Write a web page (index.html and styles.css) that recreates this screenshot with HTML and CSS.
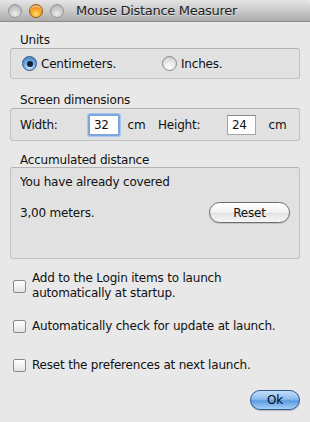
FILE: index.html
```html
<!DOCTYPE html>
<html>
<head>
<meta charset="utf-8">
<link rel="stylesheet" href="styles.css">
</head>
<body>
<div class="window">
  <div class="titlebar">
    <div class="lights">
      <span class="light gray"></span>
      <span class="light orange"></span>
      <span class="light gray"></span>
    </div>
    <div class="title">Mouse Distance Measurer</div>
  </div>
  <div class="content">
    <div class="label">Units</div>
    <div class="box units">
      <label class="radio-item first"><span class="radio on"><span class="dot"></span></span>Centimeters.</label>
      <label class="radio-item second"><span class="radio"></span>Inches.</label>
    </div>

    <div class="label gap">Screen dimensions</div>
    <div class="box dims">
      <span class="dlabel w">Width:</span>
      <span class="field focus">32</span>
      <span class="unit">cm</span>
      <span class="dlabel h">Height:</span>
      <span class="field">24</span>
      <span class="unit">cm</span>
    </div>

    <div class="label gap2">Accumulated distance</div>
    <div class="box acc">
      <div class="line">You have already covered</div>
      <div class="row">
        <span>3,00 meters.</span>
        <span class="btn reset">Reset</span>
      </div>
    </div>

    <div class="check c1"><span class="cb"></span><span>Add to the Login items to launch<br>automatically at startup.</span></div>
    <div class="check c2"><span class="cb"></span><span>Automatically check for update at launch.</span></div>
    <div class="check c3"><span class="cb"></span><span>Reset the preferences at next launch.</span></div>

    <div class="footer"><span class="btn ok">Ok</span></div>
  </div>
</div>
</body>
</html>
```
FILE: styles.css
```css
* { box-sizing: border-box; }
html, body { margin: 0; padding: 0; }
body {
  font-family: "DejaVu Sans", "Liberation Sans", sans-serif;
  font-size: 12px;
  letter-spacing: -0.2px;
  color: #111;
  background: #e8e8e8;
}
.window {
  width: 310px;
  height: 422px;
  background: #e8e8e8;
  overflow: hidden;
}
.titlebar {
  height: 22px;
  background: linear-gradient(#e4e4e4, #cbcbcb 50%, #ababab);
  border-bottom: 1px solid #8c8c8c;
  border-radius: 0 5px 0 0;
  display: flex;
  align-items: center;
}
.lights {
  display: flex;
  gap: 7px;
  padding-left: 8px;
  padding-top: 1px;
}
.light {
  width: 14px;
  height: 14px;
  border-radius: 50%;
  display: block;
}
.light.gray {
  background: radial-gradient(circle at 50% 75%, #ececec 0%, #c8c8c8 55%, #a4a4a4 100%);
  border: 1px solid #959595;
}
.light.orange {
  background: radial-gradient(circle at 50% 75%, #ffe27a 0%, #f7a21d 45%, #c45a06 100%);
  border: 1px solid #9a5a10;
  box-shadow: inset 0 2px 1px rgba(255,255,255,0.5);
}
.title {
  font-size: 13px;
  letter-spacing: -0.3px;
  color: #222;
  margin-left: 12px;
  text-shadow: 0 1px 0 rgba(255,255,255,0.5);
}
.content {
  padding: 10px 10px 0 10px;
}
.label {
  padding-left: 10px;
  height: 16px;
  line-height: 16px;
}
.label.gap { margin-top: 13px; }
.label.gap2 { margin-top: 12px; height: 14px; line-height: 14px; }
.box {
  background: #e1e1e1;
  border: 1px solid #c2c2c2;
  border-top-color: #b3b3b3;
  border-radius: 3px;
}
.units {
  height: 31px;
  display: flex;
  align-items: center;
}
.radio-item {
  display: flex;
  align-items: center;
  gap: 4px;
}
.radio-item.first { margin-left: 11px; width: 140px; }
.radio {
  width: 15px;
  height: 15px;
  border-radius: 50%;
  border: 1px solid #8a8a8a;
  background: radial-gradient(circle at 50% 80%, #ffffff 0%, #e6e6e6 50%, #c8c8c8 100%);
  display: flex;
  align-items: center;
  justify-content: center;
}
.radio.on {
  border-color: #31558c;
  background: radial-gradient(circle at 50% 80%, #c6e4fb 0%, #6fa8e0 50%, #3d76c2 100%);
}
.radio .dot {
  width: 6px;
  height: 6px;
  border-radius: 50%;
  background: #10203a;
}
.dims {
  height: 33px;
  display: flex;
  align-items: center;
}
.dlabel.w { margin-left: 9px; width: 69px; }
.dlabel.h { width: 70px; }
.field {
  width: 30px;
  height: 20px;
  background: #fff;
  border: 1px solid #a5a5a5;
  border-top-color: #8a8a8a;
  line-height: 18px;
  padding-left: 4px;
}
.field.focus {
  width: 32px;
  height: 22px;
  border: 2px solid #7fa6d8;
  box-shadow: 0 0 0 1px #a9c6ec;
  border-radius: 2px;
  padding-left: 4px;
  line-height: 18px;
}
.unit { margin-left: 8px; width: 31px; }
.dims .unit:last-child { margin-left: 12px; }
.acc {
  height: 92px;
  padding: 6px 9px 0 9px;
}
.line { line-height: 16px; }
.row {
  margin-top: 12px;
  display: flex;
  align-items: center;
  justify-content: space-between;
}
.btn {
  display: flex;
  align-items: center;
  justify-content: center;
  border-radius: 11px;
}
.reset {
  width: 81px;
  height: 21px;
  border: 1px solid #6d6d6d;
  background: linear-gradient(#ffffff, #f4f4f4 45%, #e3e3e3 55%, #f6f6f6);
  box-shadow: 0 1px 1px rgba(0,0,0,0.15);
}
.check {
  display: flex;
  align-items: center;
  gap: 6px;
  padding-left: 3px;
  line-height: 15px;
}
.c1 { margin-top: 12px; }
.c2 { margin-top: 18px; }
.c3 { margin-top: 24px; }
.cb {
  width: 13px;
  height: 13px;
  flex: none;
  border: 1px solid #8a8a8a;
  border-radius: 2px;
  background: linear-gradient(#ffffff, #f2f2f2 50%, #e2e2e2);
}
.footer {
  margin-top: 17px;
  display: flex;
  justify-content: flex-end;
}
.ok {
  width: 50px;
  height: 20px;
  border: 1px solid #2f5a94;
  background: linear-gradient(#c4def7, #8bbdee 45%, #5b9be2 55%, #a6d0f6);
  box-shadow: 0 1px 1px rgba(0,0,0,0.2);
  color: #0a0a0a;
}
```
